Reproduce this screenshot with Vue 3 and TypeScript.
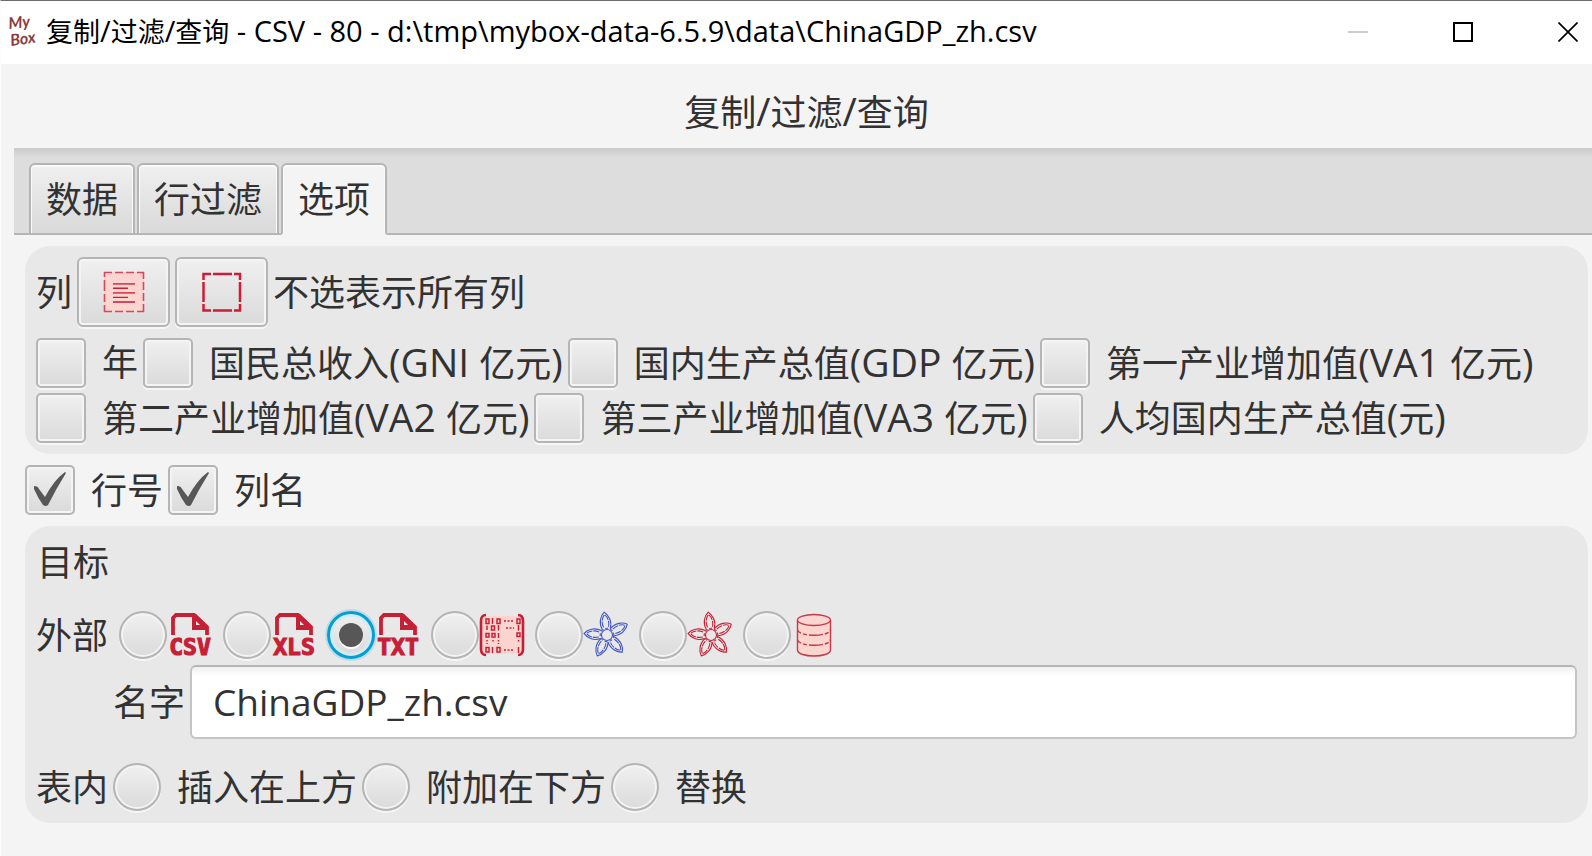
<script setup lang="ts">
import { ref } from 'vue'

interface Part {
  text: string
  latin?: boolean
}

interface Column {
  id: string
  label: string
}

// Latin runs are set slightly larger than the Chinese text around them.
function split(label: string): Part[] {
  return (label.match(/[\x20-\x7e]+|[^\x20-\x7e]+/g) ?? []).map((text) => ({
    text,
    latin: /^[\x20-\x7e]/.test(text),
  }))
}

const caption = '复制/过滤/查询 - CSV - 80 - d:\\tmp\\mybox-data-6.5.9\\data\\ChinaGDP_zh.csv'
const heading = '复制/过滤/查询'
const tabs = ['数据', '行过滤', '选项']
const activeTab = ref('选项')

const columns: Column[] = [
  { id: 'year', label: '年' },
  { id: 'gni', label: '国民总收入(GNI 亿元)' },
  { id: 'gdp', label: '国内生产总值(GDP 亿元)' },
  { id: 'va1', label: '第一产业增加值(VA1 亿元)' },
  { id: 'va2', label: '第二产业增加值(VA2 亿元)' },
  { id: 'va3', label: '第三产业增加值(VA3 亿元)' },
  { id: 'percapita', label: '人均国内生产总值(元)' },
]
const selected = ref<string[]>([])

const rowNumber = ref(true)
const columnNames = ref(true)

const externals = [
  { id: 'csv', name: 'CSV' },
  { id: 'excel', name: 'XLS' },
  { id: 'txt', name: 'TXT' },
  { id: 'matrix', name: '矩阵' },
  { id: 'system', name: '系统粘贴板' },
  { id: 'mybox', name: 'MyBox粘贴板' },
  { id: 'table', name: '数据库表' },
]
const inTable = [
  { id: 'insert', label: '插入在上方' },
  { id: 'append', label: '附加在下方' },
  { id: 'replace', label: '替换' },
]
const target = ref('txt')
const name = ref('ChinaGDP_zh.csv')
const petals = [-7, 62, 138, 205, 274]
</script>

<template>
  <div class="window">
    <header class="titlebar">
      <svg class="logo" width="34" height="46" viewBox="0 -5 34 46" aria-hidden="true">
        <g fill="#8e3b3b" font-family="Lato, sans-serif" font-style="italic" font-weight="700" font-size="16">
          <text x="1" y="15" transform="rotate(-6 1 15)">My</text>
          <text x="3" y="32" transform="rotate(-8 3 32)">Box</text>
        </g>
      </svg>
      <span class="caption"><span v-for="(p, i) in split(caption)" :key="i" :class="{ latin: p.latin }">{{ p.text }}</span></span>
      <div class="controls">
        <button type="button" aria-label="最小化" disabled>
          <svg width="20" height="20" viewBox="0 0 20 20"><path d="M0 10H20" stroke="#cccccc" stroke-width="2" /></svg>
        </button>
        <button type="button" aria-label="最大化">
          <svg width="20" height="20" viewBox="0 0 20 20"><rect x="1" y="1" width="18" height="18" fill="none" stroke="#000" stroke-width="2" /></svg>
        </button>
        <button type="button" aria-label="关闭">
          <svg width="20" height="20" viewBox="0 0 20 20"><path d="M0.5 0.5L19.5 19.5M19.5 0.5L0.5 19.5" stroke="#000" stroke-width="1.7" /></svg>
        </button>
      </div>
    </header>

    <h1 class="heading">
      <span v-for="(p, i) in split(heading)" :key="i" :class="{ latin: p.latin }">{{ p.text }}</span>
    </h1>

    <main class="tab-pane">
      <div class="tab-header" role="tablist">
        <button
          v-for="tab in tabs"
          :key="tab"
          type="button"
          role="tab"
          class="tab"
          :class="{ active: tab === activeTab }"
          :aria-selected="tab === activeTab"
          @click="activeTab = tab"
        >{{ tab }}</button>
      </div>

      <div class="content">
        <section class="panel columns-panel">
          <div class="row tools">
            <span class="text">列</span>
            <button type="button" class="tool" aria-label="全选" @click="selected = columns.map((c) => c.id)">
              <svg width="42" height="42" viewBox="0 0 42 42">
                <rect x="1" y="1" width="40" height="40" fill="#fdd5d0" />
                <path d="M1.5 6V1.5H9M12 1.5H20M23 1.5H31M34 1.5H40.5V8M40.5 11V19M40.5 22V30M40.5 33V40.5H34M31 40.5H23M20 40.5H12M9 40.5H1.5V34M1.5 31V23M1.5 20V9" fill="none" stroke="#d5485b" stroke-width="1.6" />
                <path d="M10 12.8H32M10 21.8H32M10 31H32" stroke="#d5485b" stroke-width="1.8" />
                <path d="M10 17.3H25M10 26.4H25" stroke="#c62036" stroke-width="1.4" />
              </svg>
            </button>
            <button type="button" class="tool" aria-label="全不选" @click="selected = []">
              <svg width="42" height="42" viewBox="0 0 42 42">
                <path d="M2.5 9V3H10M12 3H31M33 3H39V9M39 11V31M39 33V39.5H33M31 39.5H12M10 39.5H2.5V33M2.5 31V11" fill="none" stroke="#cb1d35" stroke-width="2.5" />
              </svg>
            </button>
            <span class="text">不选表示所有列</span>
          </div>
          <div class="checks">
            <label v-for="c in columns" :key="c.id" class="choice">
              <input v-model="selected" type="checkbox" class="box" :value="c.id" />
              <span><span v-for="(p, i) in split(c.label)" :key="i" :class="{ latin: p.latin }">{{ p.text }}</span></span>
            </label>
          </div>
        </section>

        <div class="row options">
          <label class="choice"><input v-model="rowNumber" type="checkbox" class="box" /><span class="text">行号</span></label>
          <label class="choice"><input v-model="columnNames" type="checkbox" class="box" /><span class="text">列名</span></label>
        </div>

        <section class="panel target-panel">
          <h2 class="subheading text">目标</h2>
          <div class="row externals">
            <span class="lead text">外部</span>
            <label v-for="e in externals" :key="e.id" class="format">
              <input v-model="target" type="radio" name="target" class="dot" :value="e.id" :aria-label="e.name" />
              <svg width="46" height="54" viewBox="0 -4 46 54" aria-hidden="true">
                <g v-if="e.id === 'csv' || e.id === 'excel' || e.id === 'txt'" fill="#c62036">
                  <path d="M6 23V6L9 3H27L40 15V23" fill="none" stroke="#c62036" stroke-width="3.8" />
                  <path fill-rule="evenodd" d="M25 2H29L41 14V18H25ZM29 9V13H33Z" />
                  <text x="23" y="43" text-anchor="middle" font-family="'DejaVu Sans Mono', monospace" font-weight="700" font-size="23" stroke="#c62036" stroke-width="1.2">{{ e.name }}</text>
                </g>
                <g v-else-if="e.id === 'matrix'" fill="none" stroke="#c62036">
                  <rect x="3" y="4" width="40" height="38" fill="#fdd5d0" stroke="none" />
                  <path d="M7 3Q2 3 2 9V37Q2 43 7 43M39 3Q44 3 44 9V37Q44 43 39 43" stroke-width="2.6" />
                  <g stroke-width="1.5">
                    <rect x="7" y="7" width="3" height="4.5" /><path d="M13.5 6V12" /><rect x="18" y="7" width="3" height="4.5" />
                    <path d="M25 9H35" stroke-dasharray="2 1.5" /><rect x="38" y="7" width="3" height="4.5" />
                    <path d="M8 13.5V18M19.5 13V18.5M39.5 13V18.5" /><rect x="12.5" y="14" width="3" height="4" />
                    <path d="M27 16H35" stroke-dasharray="2 1.5" />
                    <rect x="7" y="21.5" width="3" height="3.5" /><rect x="13" y="21.5" width="3" height="3.5" /><path d="M19.5 21V26" /><rect x="38" y="21" width="3" height="3.5" />
                    <path d="M8 28V32M14 28V30M19.5 28V32M39.5 28V30" stroke-dasharray="1.5 1.5" />
                    <rect x="7" y="35.5" width="3" height="4.5" /><path d="M13.5 35V41" /><rect x="18" y="35.5" width="3" height="4.5" />
                    <path d="M25 38H35" stroke-dasharray="2 1.5" /><path d="M39.5 35V41" />
                  </g>
                </g>
                <g v-else-if="e.id === 'system' || e.id === 'mybox'" fill="none" :stroke="e.id === 'system' ? '#4457c4' : '#c62036'" stroke-width="1.1">
                  <circle cx="24" cy="23" r="5.5" />
                  <circle cx="24" cy="23" r="6.8" stroke-dasharray="3 2" />
                  <g v-for="a in petals" :key="a" :transform="`rotate(${a} 24 23)`">
                    <path d="M20 17C17 10 20 3 24 0C28 3 31 10 28 17" />
                    <path d="M21.5 15C19.5 9 22 4 24 2.5C26 4 28.5 9 26.5 15" stroke-dasharray="6 1" />
                  </g>
                </g>
                <g v-else fill="#fdd5d0" stroke="#c23a4c" stroke-width="1.4">
                  <path d="M6.5 8V38C6.5 46 39.5 46 39.5 38V8" />
                  <ellipse cx="23" cy="8" rx="16.5" ry="5.5" />
                  <path d="M6.5 18C8 25 38 25 39.5 18M6.5 28C8 35 38 35 39.5 28" fill="none" stroke-dasharray="5 2 4 2 14 2 4 2" />
                </g>
              </svg>
            </label>
          </div>
          <div class="row name-row">
            <label for="target-name" class="text">名字</label>
            <input id="target-name" v-model="name" type="text" class="field" />
          </div>
          <div class="row in-table">
            <span class="text">表内</span>
            <label v-for="t in inTable" :key="t.id" class="choice">
              <input v-model="target" type="radio" name="target" class="dot" :value="t.id" />
              <span class="text">{{ t.label }}</span>
            </label>
          </div>
        </section>
      </div>
    </main>
  </div>
</template>

<style>
body {
  background: #f4f4f4;
}
</style>

<style scoped>
* {
  box-sizing: border-box;
}

.window {
  min-height: 100vh;
  border-top: 1px solid #6e6c6e;
  border-left: 1px solid #fcfcfc;
  background: #f4f4f4;
  color: #323232;
  font-family: 'Open Sans', 'Noto Sans CJK SC', sans-serif;
  font-size: 36px;
  line-height: 48px;
}

.latin {
  font-size: 39px;
  white-space: pre;
}

.text {
  padding-top: 2px;
  line-height: 46px;
}

.titlebar {
  display: flex;
  align-items: center;
  height: 63px;
  padding: 0 14px 2px 7px;
  background: #fff;
  color: #000;
}

.logo {
  flex: none;
}

.caption {
  flex: 1;
  min-width: 0;
  margin-left: 4px;
  overflow: hidden;
  font-size: 27px;
  white-space: nowrap;
}

.caption .latin {
  font-size: 29px;
}

.controls {
  display: flex;
  gap: 85px;
}

.controls button {
  display: block;
  padding: 0;
  border: 0;
  background: none;
}

.controls svg,
.tool svg {
  display: block;
}

.heading {
  margin: 0;
  padding: 23px 0 11px 20px;
  font-size: 36px;
  font-weight: 400;
  text-align: center;
}

.tab-pane {
  padding-left: 13px;
}

.tab-header {
  display: flex;
  align-items: flex-end;
  gap: 2px;
  height: 87px;
  padding: 0 15px;
  background: linear-gradient(#cbcbcb, #dddddd 10px);
  box-shadow: inset 0 -2px #b5b5b5;
}

.tab {
  height: 72px;
  padding: 2px 15px 0;
  border: 2px solid #b5b5b5;
  border-radius: 6px 6px 0 0;
  background: linear-gradient(#f0f0f0, #d9d9d9);
  box-shadow: inset 0 1px 0 1px #fafafa;
  color: inherit;
  font: inherit;
}

.tab.active {
  border-bottom-color: #f4f4f4;
  background: #f4f4f4;
}

.content {
  padding: 11px 4px 33px 11px;
}

.panel {
  border-radius: 25px;
  background: #e8e8e8;
}

.row {
  display: flex;
  align-items: center;
  gap: 5px;
}

.columns-panel {
  padding: 11px;
}

.tool {
  display: grid;
  place-items: center;
  width: 93px;
  height: 70px;
  padding: 0;
  border: 2px solid #b5b5b5;
  border-radius: 6px;
  background: linear-gradient(#f0f0f0, #dadada);
  box-shadow: inset 0 0 0 2px #f4f4f4, 0 2px #f6f6f6;
}

.checks {
  display: flex;
  flex-wrap: wrap;
  gap: 5px;
  margin-top: 11px;
}

.choice {
  display: flex;
  align-items: center;
  gap: 16px;
  white-space: nowrap;
}

.box,
.dot {
  flex: none;
  display: grid;
  place-items: center;
  width: 50px;
  height: 50px;
  margin: 0;
  border: 2px solid #b5b5b5;
  border-radius: 5px;
  appearance: none;
  background: linear-gradient(#f0f0f0, #dadada);
  box-shadow: inset 0 0 0 2px #f4f4f4, 0 2px #f6f6f6;
}

.box:checked::before {
  content: '';
  width: 32px;
  height: 36px;
  background: #575757;
  clip-path: path('M0 14C3 14 4 15 5 17L11 25Q20 8 31 0L32 1Q22 17 14 33Q12 35 9 33Q4 26 0 17Z');
}

.dot {
  width: 48px;
  height: 48px;
  border-radius: 50%;
}

.externals .dot:checked {
  border: 3px solid #039ed3;
  box-shadow: inset 0 0 0 3px #d3ebf3, 0 0 0 2px #bfdce6;
}

.dot:checked::before {
  content: '';
  width: 24px;
  height: 24px;
  border-radius: 50%;
  background: #575757;
  box-shadow: 0 2px #fff;
}

.options {
  padding: 11px 0;
}

.target-panel {
  padding: 12px 11px;
}

.subheading {
  margin: 0;
  padding-left: 1px;
  font-size: 36px;
  font-weight: 400;
}

.externals {
  gap: 10px;
  margin-top: 22px;
}

.lead {
  padding-right: 1px;
}

.format {
  display: flex;
  align-items: center;
}

.format svg {
  flex: none;
}

.name-row {
  margin-top: 3px;
  padding-left: 77px;
}

.field {
  flex: 1;
  min-width: 0;
  height: 74px;
  padding: 0 21px 2px;
  border: 2px solid #c4c4c4;
  border-top-color: #b5b5b5;
  border-radius: 6px;
  background: linear-gradient(#f0f0f0, #fff 9px);
  color: inherit;
  font-family: inherit;
  font-size: 37px;
}

.in-table {
  margin-top: 24px;
}
</style>
